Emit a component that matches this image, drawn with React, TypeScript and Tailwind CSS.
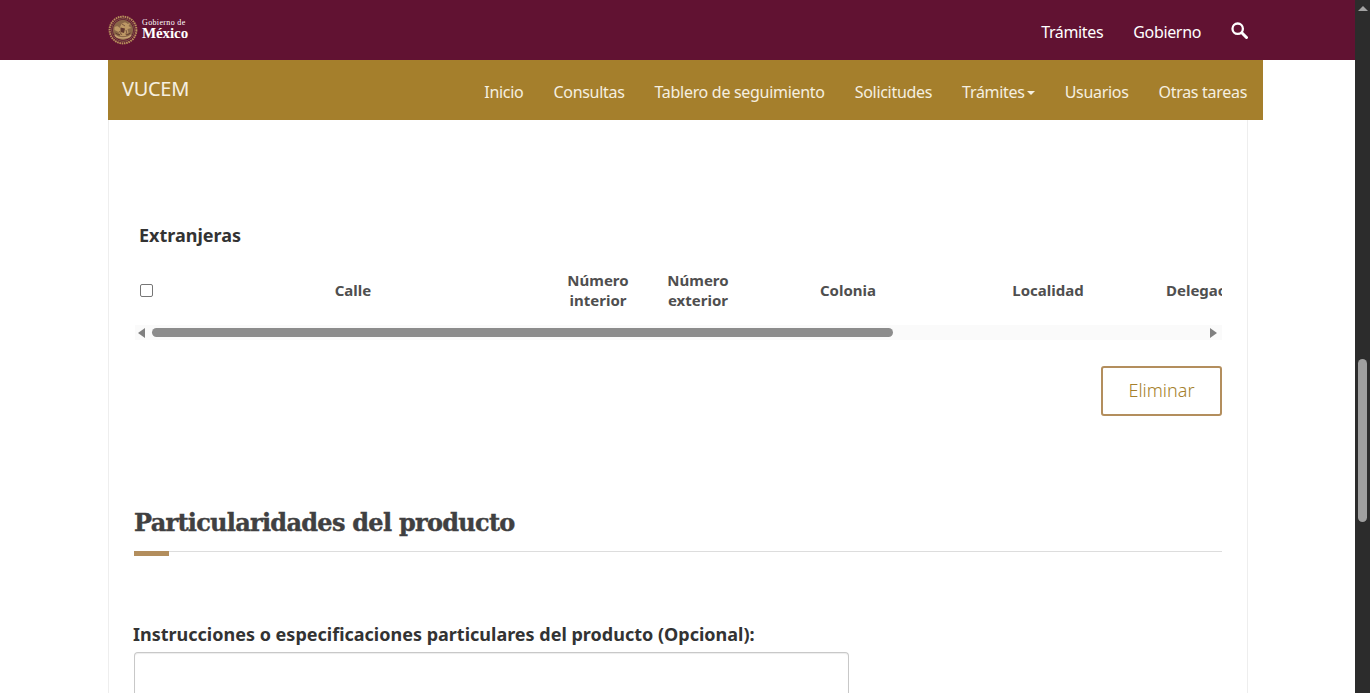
const sans = "font-['Noto_Sans','Open_Sans',sans-serif]";

function Emblem() {
  return (
    <svg width="30" height="30" viewBox="0 0 30 30" fill="none">
      <circle cx="15" cy="15" r="13.4" stroke="#b8925c" strokeWidth="2" strokeDasharray="1.6 0.7" />
      <circle cx="15" cy="15" r="11.4" stroke="#7d5a44" strokeWidth="1" />
      <circle cx="15" cy="15" r="10.2" fill="#8a6748" />
      <path d="M6.5 12c2-1 4-1 5 1l2-4c2-2 5-2 6 0l3-1-2 3 3 2-4 1 1 4-3 3h-5l-2-4-4-2z" fill="#bd9865" />
      <path d="M7 20c3 4 13 4 16 0" stroke="#c6a272" strokeWidth="1.5" />
      <path d="M7.5 18c3 2 4 2 5 1M22.5 18c-3 2-4 2-5 1" stroke="#5f3a2c" strokeWidth="1" />
      <path d="M12.5 12.5l4.5 1-1 4.5-3.5-1z" fill="#61392f" />
      <path d="M14 9l3 2M11 16l3 4M18 15l1 4" stroke="#6b4636" strokeWidth="0.8" />
    </svg>
  );
}

function SearchIcon() {
  return (
    <svg className="ml-[30px] -mt-[2px]" width="17" height="17" viewBox="0 0 17 17" fill="none" stroke="white">
      <circle cx="6.7" cy="6.7" r="5.2" strokeWidth="2.3" />
      <path d="M10.8 10.8l4.7 4.7" strokeWidth="3" strokeLinecap="round" />
    </svg>
  );
}

function TopBar() {
  return (
    <header className="h-[60px] bg-[#611232]">
      <div className="ml-[108px] flex h-full w-[1140px] items-center justify-between">
        <div className="-mt-[1px] flex items-center gap-[4px]">
          <Emblem />
          <div className="text-white font-['Liberation_Serif',serif]">
            <p className="text-[8px] leading-[8px] tracking-[0.35px]">Gobierno de</p>
            <p className="text-[15px] leading-[13px] font-bold tracking-[-0.1px]">México</p>
          </div>
        </div>
        <nav className="mt-[3px] flex items-center text-[16px] tracking-[-0.35px] text-white">
          <a>Trámites</a>
          <a className="ml-[30px]">Gobierno</a>
          <SearchIcon />
        </nav>
      </div>
    </header>
  );
}

function GoldBar() {
  const links = ["Inicio", "Consultas", "Tablero de seguimiento", "Solicitudes"];
  return (
    <div className="flex h-[60px] w-[1155px] items-center justify-between bg-[#a57f2c] pl-[14px] pr-[16px] text-[#f5efe0]">
      <span className="-mt-[3px] text-[20px] tracking-[-0.3px]">VUCEM</span>
      <nav className="mt-[4px] flex items-center gap-[30px] text-[16px] tracking-[-0.3px]">
        {links.map((l) => (
          <a key={l}>{l}</a>
        ))}
        <a className="flex items-center">
          Trámites
          <span className="ml-[2px] mt-[2px] h-0 w-0 border-x-[4px] border-t-[4px] border-x-transparent border-t-[#f5efe0]" />
        </a>
        <a>Usuarios</a>
        <a>Otras tareas</a>
      </nav>
    </div>
  );
}

function ForeignTable() {
  return (
    <section className="w-[1088px]">
      <h3 className="pl-[5px] text-[18px] leading-[24px] font-bold text-[#333333]">Extranjeras</h3>
      <div className="mt-[21px] flex h-[44px] w-[1088px] items-center overflow-hidden text-center text-[15px] leading-[20px] font-bold text-[#4f4f4f]">
        <div className="w-[27px] shrink-0 pl-[6px]">
          <span className="block h-[13px] w-[13px] rounded-[2px] border border-[#767676] bg-white" />
        </div>
        <div className="w-[384px] shrink-0">Calle</div>
        <div className="w-[106px] shrink-0">Número<br />interior</div>
        <div className="w-[94px] shrink-0">Número<br />exterior</div>
        <div className="w-[206px] shrink-0">Colonia</div>
        <div className="w-[194px] shrink-0">Localidad</div>
        <div className="w-[200px] shrink-0 whitespace-nowrap text-left pl-[21px]">Delegación</div>
      </div>
      <div className="mt-[13px] ml-[1px] flex h-[15px] w-[1087px] items-center bg-[#fafafa]">
        <span className="ml-[3px] h-0 w-0 border-y-[5px] border-r-[7px] border-y-transparent border-r-[#7f7f7f]" />
        <div className="ml-[7px] h-[9px] w-[741px] rounded-full bg-[#8c8c8c]" />
        <span className="ml-[317px] h-0 w-0 border-y-[5px] border-l-[7px] border-y-transparent border-l-[#7f7f7f]" />
      </div>
      <div className="mt-[26px] flex justify-end">
        <button className="h-[50px] w-[121px] rounded-[3px] border-2 border-[#b38e5d] pb-[2px] text-[18px] font-light text-[#a57f2c]">
          Eliminar
        </button>
      </div>
    </section>
  );
}

function Particularidades() {
  return (
    <section className="mt-[88px] w-[1088px]">
      <h2 className="pt-[1px] text-[24px] leading-[35px] font-bold tracking-[-0.72px] text-[#404041] [-webkit-text-stroke:0.4px_#404041] font-['DejaVu_Serif',serif]">
        Particularidades del producto
      </h2>
      <div className="relative mt-[11px] h-px bg-[#dddddd]">
        <div className="absolute top-0 left-0 h-[5px] w-[35px] bg-[#b38e5d]" />
      </div>
      <label className="-ml-[1px] mt-[71px] block text-[18px] leading-[22px] font-bold text-[#333333]">
        Instrucciones o especificaciones particulares del producto (Opcional):
      </label>
      <div className="mt-[7px] h-[80px] w-[715px] rounded-[4px] border border-[#c8c8c8] border-b-0 shadow-[inset_0_1px_1px_rgba(0,0,0,0.075)]" />
    </section>
  );
}

export default function App() {
  return (
    <div className={`flex h-[693px] w-[1370px] overflow-hidden bg-white ${sans}`}>
      <main className="w-[1355px] shrink-0">
        <TopBar />
        <div className="ml-[108px]">
          <GoldBar />
          <div className="h-[573px] w-[1140px] border-x border-[#eeeeee] pl-[25px] pt-[103px]">
            <ForeignTable />
            <Particularidades />
          </div>
        </div>
      </main>
      {/* barra de scroll del navegador */}
      <aside className="flex w-[15px] shrink-0 flex-col items-center bg-[#2c2c2c]">
        <span className="mt-[6px] h-0 w-0 border-x-[5px] border-b-[5px] border-x-transparent border-b-[#a3a3a3]" />
        <div className="mt-[348px] h-[163px] w-[9px] rounded-full bg-[#9f9f9f]" />
      </aside>
    </div>
  );
}
